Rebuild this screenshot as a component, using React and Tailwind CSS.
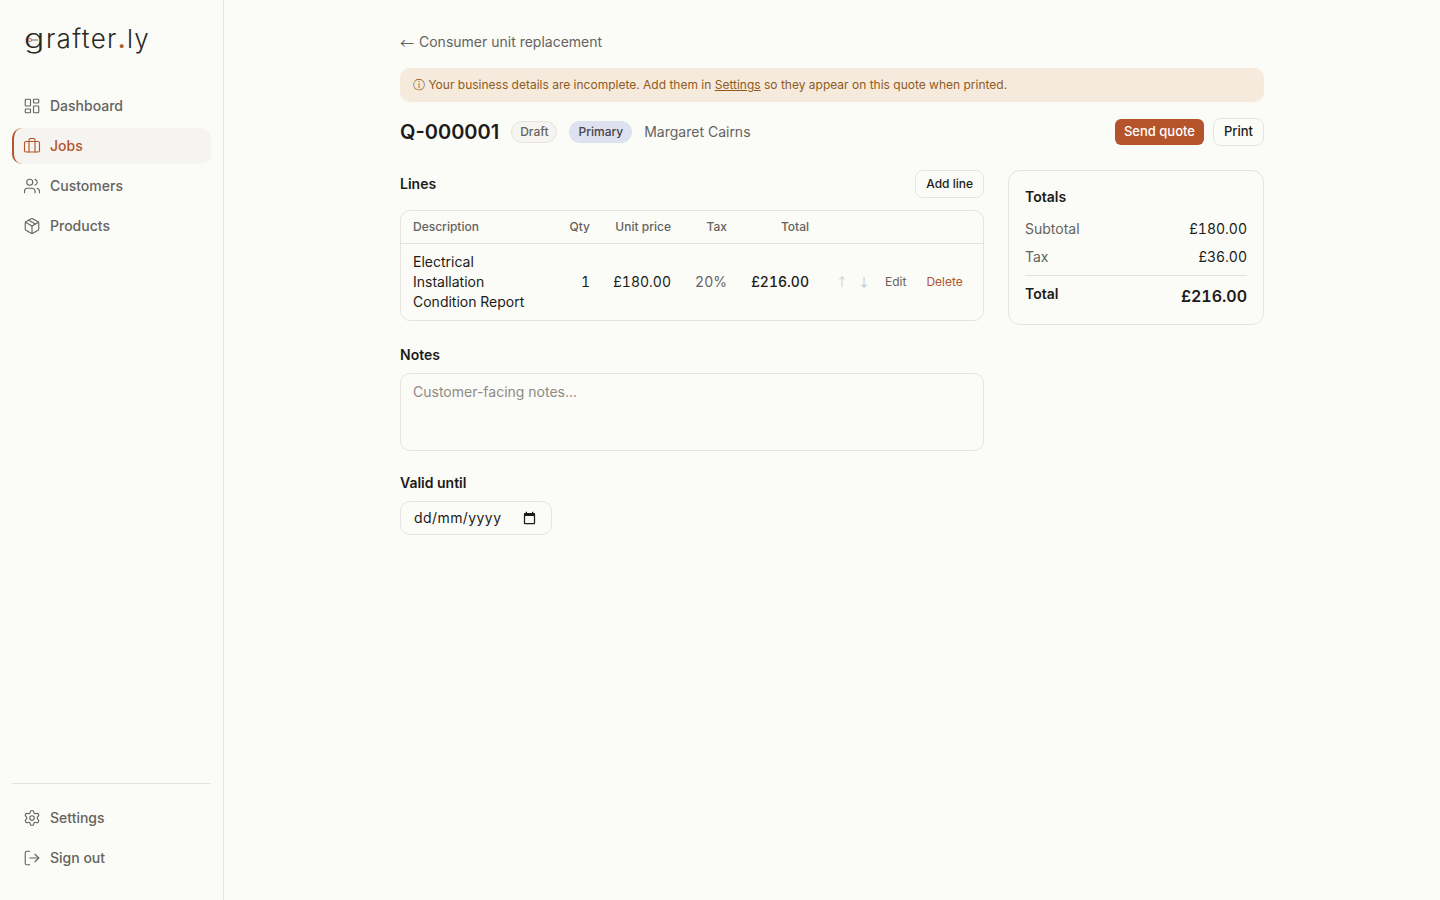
import { Briefcase, LayoutDashboard, LogOut, Package, Settings, Users } from "lucide-react";

const nav = [
  { label: "Dashboard", icon: LayoutDashboard },
  { label: "Jobs", icon: Briefcase, active: true },
  { label: "Customers", icon: Users },
  { label: "Products", icon: Package },
];

function NavItem({ label, icon: Icon, active }) {
  return (
    <a
      href="#"
      className={
        active
          ? "flex h-9 items-center gap-2.5 rounded-[10px] border-l-2 border-[#b5532a] bg-[#f5f4f0] pl-[10px] pr-3 text-sm font-medium text-[#b5532a]"
          : "flex h-9 items-center gap-2.5 rounded-[10px] px-3 text-sm font-medium text-[#65635e]"
      }
    >
      <Icon size={18} strokeWidth={1.5} className="-mx-px" />
      {label}
    </a>
  );
}

function Logo() {
  return (
    <div className="relative ml-3 h-8 text-[26px] leading-[30px] font-light tracking-[0.05em] text-[#2a2926]">
      <span className="mr-[5px] inline-block origin-left scale-x-[1.3]">g</span>rafter<span className="font-medium text-[#b5532a]">.</span>ly
      <svg className="absolute top-[13px] left-[3px]" width="12" height="6" viewBox="0 0 12 6" fill="none">
        <circle cx="3" cy="3" r="1.6" stroke="#b5532a" strokeWidth="0.8" />
        <path d="M4.6 3H11" stroke="#2a2926" strokeWidth="0.7" />
      </svg>
    </div>
  );
}

export default function App() {
  return (
    <div className="flex min-h-screen bg-[#fbfbf7] text-[#1c1b19] antialiased" style={{ fontFamily: "Inter, sans-serif" }}>
      <aside className="flex h-screen w-[224px] shrink-0 flex-col border-r border-[#e5e4df] px-3 pt-6 pb-6">
        <Logo />
        <nav className="mt-8 flex flex-col gap-1">
          {nav.map((item) => (
            <NavItem key={item.label} {...item} />
          ))}
        </nav>
        <div className="mt-auto flex flex-col gap-1 border-t border-[#e5e4df] pt-4">
          <NavItem label="Settings" icon={Settings} />
          <NavItem label="Sign out" icon={LogOut} />
        </div>
      </aside>

      <main className="flex-1">
        <div className="mx-auto max-w-[896px] px-4 pt-8">
          <a href="#" className="flex h-5 items-center text-sm leading-5 text-[#65635e]">
            <span className="mr-[5px] font-['Noto_Sans_CJK_JP'] leading-none">←</span>
            Consumer unit replacement
          </a>

          <div className="mt-4 flex h-[34px] items-center rounded-[10px] bg-[#f5eadb] px-[13px] text-xs text-[#8f5b1f]">
            <span>
              ⓘ Your business details are incomplete. Add them in{" "}
              <a href="#" className="underline">Settings</a> so they appear on this quote when printed.
            </span>
          </div>

          <div className="mt-4 flex h-[28px] items-center">
            <h1 className="text-xl font-semibold">Q-000001</h1>
            <span className="ml-3 rounded-full border border-[#e5e4df] bg-[#f5f4f0] px-2 py-[2px] text-xs leading-4 font-medium text-[#65635e]">Draft</span>
            <span className="ml-3 rounded-full bg-[#dde1f0] px-[9px] py-[3px] text-xs leading-4 font-medium text-[#44434a]">Primary</span>
            <span className="ml-3 text-sm text-[#65635e]">Margaret Cairns</span>
            <button className="ml-auto h-[26px] rounded-md bg-[#b5532a] px-[9px] text-[13px] font-medium text-white">Send quote</button>
            <button className="ml-[9px] h-[28px] rounded-lg border border-[#e5e4df] px-[10px] text-[13px] font-medium">Print</button>
          </div>

          <div className="mt-6 flex items-start gap-6">
            <div className="w-[584px] shrink-0">
              <div className="flex h-[28px] items-center justify-between">
                <h2 className="text-sm font-semibold">Lines</h2>
                <button className="h-[28px] rounded-lg border border-[#e5e4df] px-[10px] text-xs font-medium">Add line</button>
              </div>

              <div className="mt-3 overflow-hidden rounded-[10px] border border-[#e5e4df]">
                <table className="w-full table-fixed border-collapse text-sm tabular-nums">
                  <thead>
                    <tr className="h-[32px] border-b border-[#e5e4df] text-xs text-[#65635e]">
                      <th className="w-[156px] px-3 text-left font-medium">Description</th>
                      <th className="w-[45px] pr-3 text-right font-medium">Qty</th>
                      <th className="w-[81px] pr-3 text-right font-medium">Unit price</th>
                      <th className="w-[56px] pr-3 text-right font-medium">Tax</th>
                      <th className="w-[82px] pr-3 text-right font-medium">Total</th>
                      <th />
                    </tr>
                  </thead>
                  <tbody>
                    <tr className="h-[77px]">
                      <td className="px-3 leading-5">Electrical Installation Condition Report</td>
                      <td className="pr-3 text-right">1</td>
                      <td className="pr-3 text-right">£180.00</td>
                      <td className="pr-3 text-right text-[#65635e]">20%</td>
                      <td className="pr-3 text-right font-medium">£216.00</td>
                      <td>
                        <div className="flex items-center pl-[10px] text-xs">
                          <span className="w-[22px] text-center font-['Noto_Sans_CJK_JP'] text-[#cfcec9]">↑</span>
                          <span className="w-[22px] text-center font-['Noto_Sans_CJK_JP'] text-[#c4c3be]">↓</span>
                          <span className="ml-[10px] text-[#65635e]">Edit</span>
                          <span className="ml-5 text-[#b5532a]">Delete</span>
                        </div>
                      </td>
                    </tr>
                  </tbody>
                </table>
              </div>

              <h2 className="mt-6 text-sm leading-5 font-semibold">Notes</h2>
              <textarea
                rows={3}
                placeholder="Customer-facing notes..."
                className="mt-2 block h-[78px] w-full resize-none rounded-[10px] border border-[#e5e4df] bg-transparent px-3 py-2 text-sm leading-5 outline-none placeholder:text-[#8d8b85]"
              />

              <h2 className="mt-[22px] text-sm leading-5 font-semibold">Valid until</h2>
              <div className="mt-2 flex h-[34px] w-[152px] items-center justify-between rounded-[10px] border border-[#e5e4df] pr-[14px] pl-[13px] text-sm">
                <span className="tracking-[0.03em]">dd/mm/yyyy</span>
                <svg width="15" height="15" viewBox="0 0 24 24" fill="currentColor">
                  <path d="M19 3h-1V1h-2v2H8V1H6v2H5c-1.11 0-1.99.9-1.99 2L3 19c0 1.1.89 2 2 2h14c1.1 0 2-.9 2-2V5c0-1.1-.9-2-2-2zm0 16H5V8h14v11z" />
                </svg>
              </div>
            </div>

            <div className="flex-1 rounded-xl border border-[#e5e4df] px-4 pt-4 pb-4">
              <h2 className="text-sm leading-5 font-semibold">Totals</h2>
              <div className="mt-3 flex justify-between text-sm leading-5 tabular-nums">
                <span className="text-[#65635e]">Subtotal</span>
                <span>£180.00</span>
              </div>
              <div className="mt-2 flex justify-between text-sm leading-5 tabular-nums">
                <span className="text-[#65635e]">Tax</span>
                <span>£36.00</span>
              </div>
              <div className="mt-2 flex justify-between border-t border-[#e5e4df] pt-2">
                <span className="text-sm leading-5 font-semibold">Total</span>
                <span className="text-base leading-6 font-semibold tabular-nums">£216.00</span>
              </div>
            </div>
          </div>
        </div>
      </main>
    </div>
  );
}
